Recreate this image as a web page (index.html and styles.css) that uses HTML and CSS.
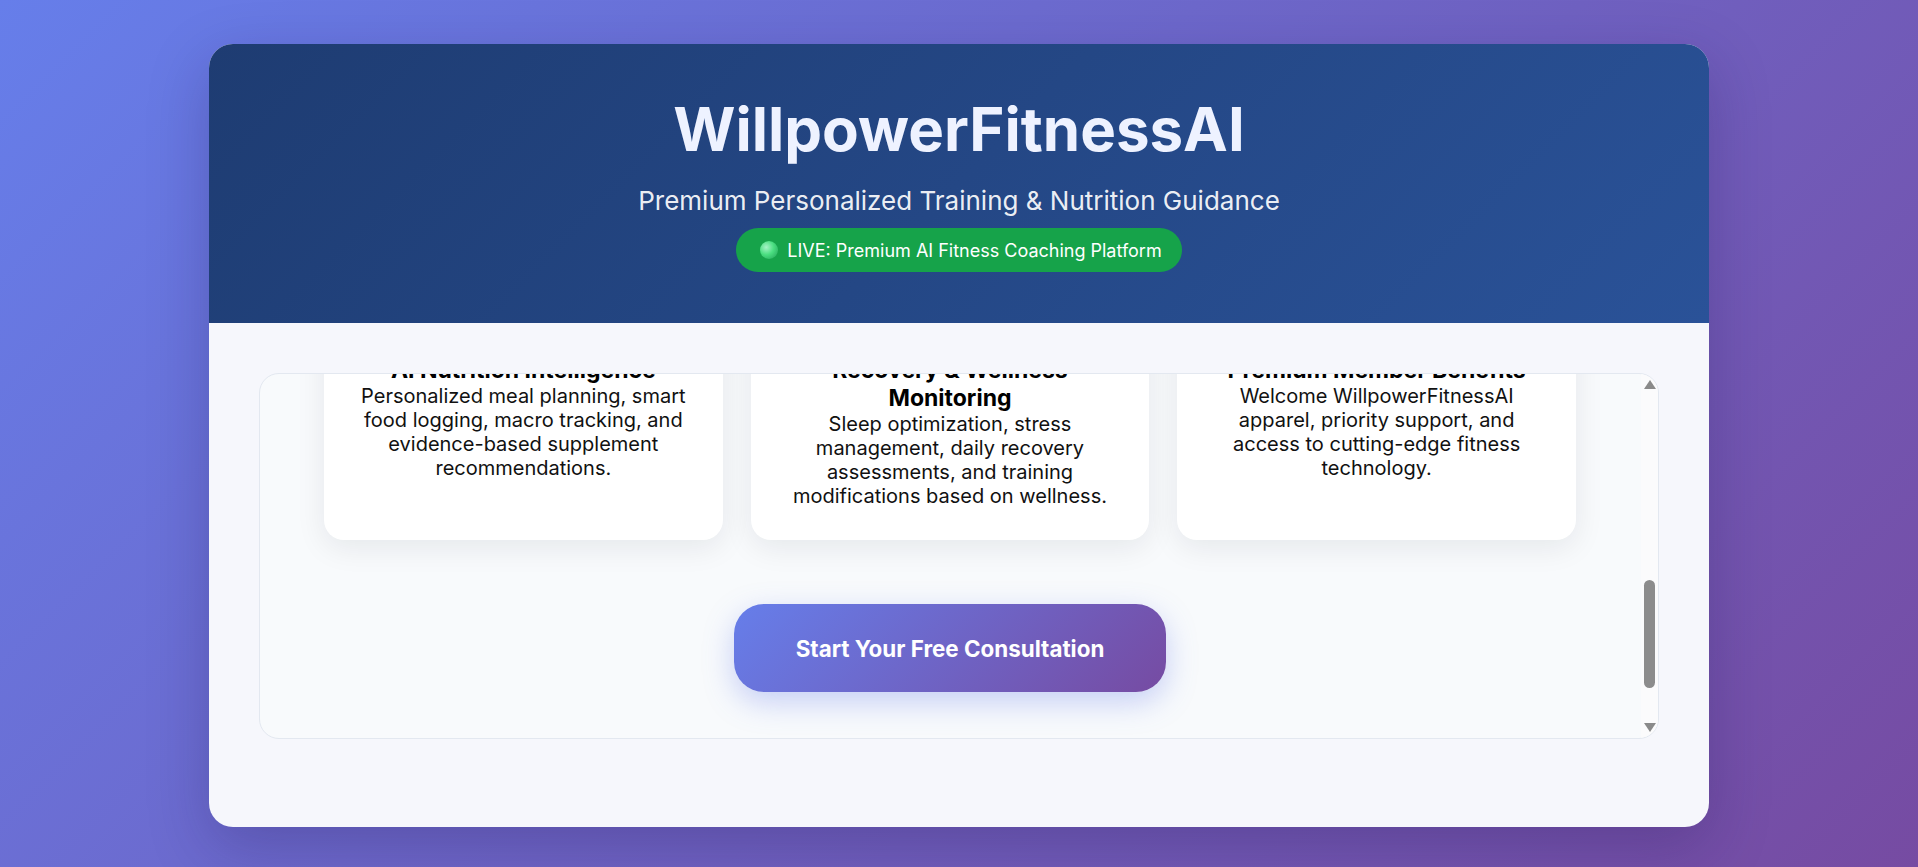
FILE: index.html
```html
<!DOCTYPE html>
<html lang="en">
<head>
<meta charset="utf-8">
<title>WillpowerFitnessAI</title>
<link rel="stylesheet" href="styles.css">
</head>
<body>
<main class="app">
  <header class="hero">
    <h1 class="hero-title">WillpowerFitnessAI</h1>
    <p class="hero-subtitle">Premium Personalized Training &amp; Nutrition Guidance</p>
    <div class="live-badge"><span class="live-dot"></span><span>LIVE: Premium AI Fitness Coaching Platform</span></div>
  </header>
  <section class="content">
    <div class="scroll-wrap">
      <div class="scroll-area" id="scrollArea">
        <div class="scroll-inner">
          <h2 class="section-title">Everything You Need to Reach Your Goals</h2>
          <div class="features">
            <article class="feature">
              <div class="feature-icon"></div>
              <h3 class="feature-title">AI Workout Programming</h3>
              <p class="feature-text">Adaptive training plans that evolve with your strength, schedule, equipment and goals.</p>
            </article>
            <article class="feature">
              <div class="feature-icon"></div>
              <h3 class="feature-title">Real-Time Progress Analytics</h3>
              <p class="feature-text">Track lifts, body metrics and consistency with clear insights on every milestone.</p>
            </article>
            <article class="feature">
              <div class="feature-icon"></div>
              <h3 class="feature-title">24/7 AI Coach Chat</h3>
              <p class="feature-text">Ask questions anytime and get expert guidance on form, nutrition and motivation.</p>
            </article>
            <article class="feature">
              <div class="feature-icon"></div>
              <h3 class="feature-title">AI Nutrition Intelligence</h3>
              <p class="feature-text" id="anchorText">Personalized meal planning, smart food logging, macro tracking, and evidence-based supplement recommendations.</p>
            </article>
            <article class="feature">
              <div class="feature-icon"></div>
              <h3 class="feature-title">Recovery &amp; Wellness Monitoring</h3>
              <p class="feature-text">Sleep optimization, stress management, daily recovery assessments, and training modifications based on wellness.</p>
            </article>
            <article class="feature">
              <div class="feature-icon"></div>
              <h3 class="feature-title">Premium Member Benefits</h3>
              <p class="feature-text">Welcome WillpowerFitnessAI apparel, priority support, and access to cutting-edge fitness technology.</p>
            </article>
          </div>
          <div class="cta">
            <button class="cta-button" type="button">Start Your Free Consultation</button>
          </div>
        </div>
      </div>
      <div class="fake-scrollbar" aria-hidden="true">
        <span class="sb-arrow sb-up"></span>
        <span class="sb-track"><span class="sb-thumb"></span></span>
        <span class="sb-arrow sb-down"></span>
      </div>
    </div>
  </section>
</main>
<script src="script.js"></script>
</body>
</html>
```
FILE: styles.css
```css
* { box-sizing: border-box; }
html, body { height: 100%; }
body {
  margin: 0;
  padding: 44px 0 40px;
  background: linear-gradient(135deg, #667eea 0%, #764ba2 100%);
  font-family: Inter, "Noto Sans", sans-serif;
  overflow: hidden;
}
.app {
  width: 1500px;
  height: 783px;
  margin: 0 auto;
  border-radius: 24px;
  overflow: hidden;
  background: #f6f7fc;
  box-shadow: 0 20px 60px rgba(30, 20, 80, 0.25);
  display: flex;
  flex-direction: column;
}
.hero {
  height: 279px;
  flex: none;
  padding-top: 49px;
  background: linear-gradient(135deg, #1e3c72 0%, #2a5298 100%);
  text-align: center;
  display: flex;
  flex-direction: column;
  align-items: center;
}
.hero-title {
  margin: 0;
  font-size: 60px;
  line-height: 72px;
  font-weight: 700;
  color: #eef2ff;
}
.hero-subtitle {
  margin: 21px 0 0;
  font-size: 26px;
  line-height: 30px;
  font-weight: 400;
  color: rgba(255, 255, 255, 0.93);
}
.live-badge {
  margin-top: 12px;
  height: 44px;
  padding: 0 20px 0 24px;
  border-radius: 22px;
  background: #16a34a;
  color: #fff;
  font-size: 18px;
  font-weight: 400;
  display: flex;
  align-items: center;
  gap: 9px;
}
.live-dot {
  width: 18px;
  height: 18px;
  border-radius: 50%;
  background: radial-gradient(circle at 35% 35%, #a7f3c7 0%, #4ade80 45%, #1f9d55 100%);
  flex: none;
}
.content {
  flex: 1;
  padding: 50px 50px 88px;
}
.scroll-wrap {
  position: relative;
  height: 366px;
  border: 1px solid #e3e8f0;
  border-radius: 20px;
  background: #f8fafc;
  overflow: hidden;
}
.scroll-area {
  height: 100%;
  overflow-y: scroll;
  scrollbar-width: none;
}
.scroll-area::-webkit-scrollbar { display: none; }
.scroll-inner {
  padding: 40px 82px 118px 64px;
}
.section-title {
  margin: 0 0 32px;
  text-align: center;
  font-size: 30px;
  line-height: 40px;
  color: #1e3c72;
}
.features {
  display: grid;
  grid-template-columns: repeat(3, 1fr);
  gap: 28px;
}
.feature {
  background: #fff;
  border-radius: 20px;
  padding: 32px;
  text-align: center;
  box-shadow: 0 8px 30px rgba(15, 23, 42, 0.08);
}
.feature-icon {
  width: 60px;
  height: 60px;
  margin: 0 auto 16px;
  border-radius: 16px;
  background: linear-gradient(135deg, #667eea, #764ba2);
}
.feature-title {
  margin: 0;
  font-size: 23px;
  line-height: 28px;
  font-weight: 700;
  color: #000;
}
.feature-text {
  margin: 0;
  font-size: 20px;
  line-height: 24px;
  color: #111;
}
.cta {
  display: flex;
  justify-content: center;
  margin-top: 64px;
}
.cta-button {
  border: 0;
  padding: 32px 62px 31px;
  border-radius: 30px;
  background: linear-gradient(135deg, #667eea 0%, #764ba2 100%);
  color: #fff;
  font-family: Inter, "Noto Sans", sans-serif;
  font-size: 22.4px;
  line-height: 25px;
  font-weight: 700;
  box-shadow: 0 10px 30px rgba(102, 126, 234, 0.35);
  cursor: pointer;
}
.fake-scrollbar {
  position: absolute;
  top: 0;
  right: 0;
  bottom: 0;
  width: 17px;
  background: #fbfbfc;
  display: flex;
  flex-direction: column;
  align-items: center;
}
.sb-arrow {
  flex: none;
  width: 0;
  height: 0;
  border-left: 6px solid transparent;
  border-right: 6px solid transparent;
}
.sb-up {
  margin-top: 6px;
  border-bottom: 9px solid #8a8a8a;
}
.sb-down {
  margin-bottom: 6px;
  border-top: 9px solid #8a8a8a;
}
.sb-track {
  flex: 1;
  width: 100%;
  position: relative;
}
.sb-thumb {
  position: absolute;
  left: 3px;
  right: 3px;
  top: 191px;
  height: 108px;
  border-radius: 6px;
  background: #8c8c8c;
}
```
FILE: script.js
```js
(function () {
  var area = document.getElementById('scrollArea');
  var anchor = document.getElementById('anchorText');
  area.scrollTop = 0;
  var top = anchor.getBoundingClientRect().top;
  area.scrollTop = top - 384;
})();
```
